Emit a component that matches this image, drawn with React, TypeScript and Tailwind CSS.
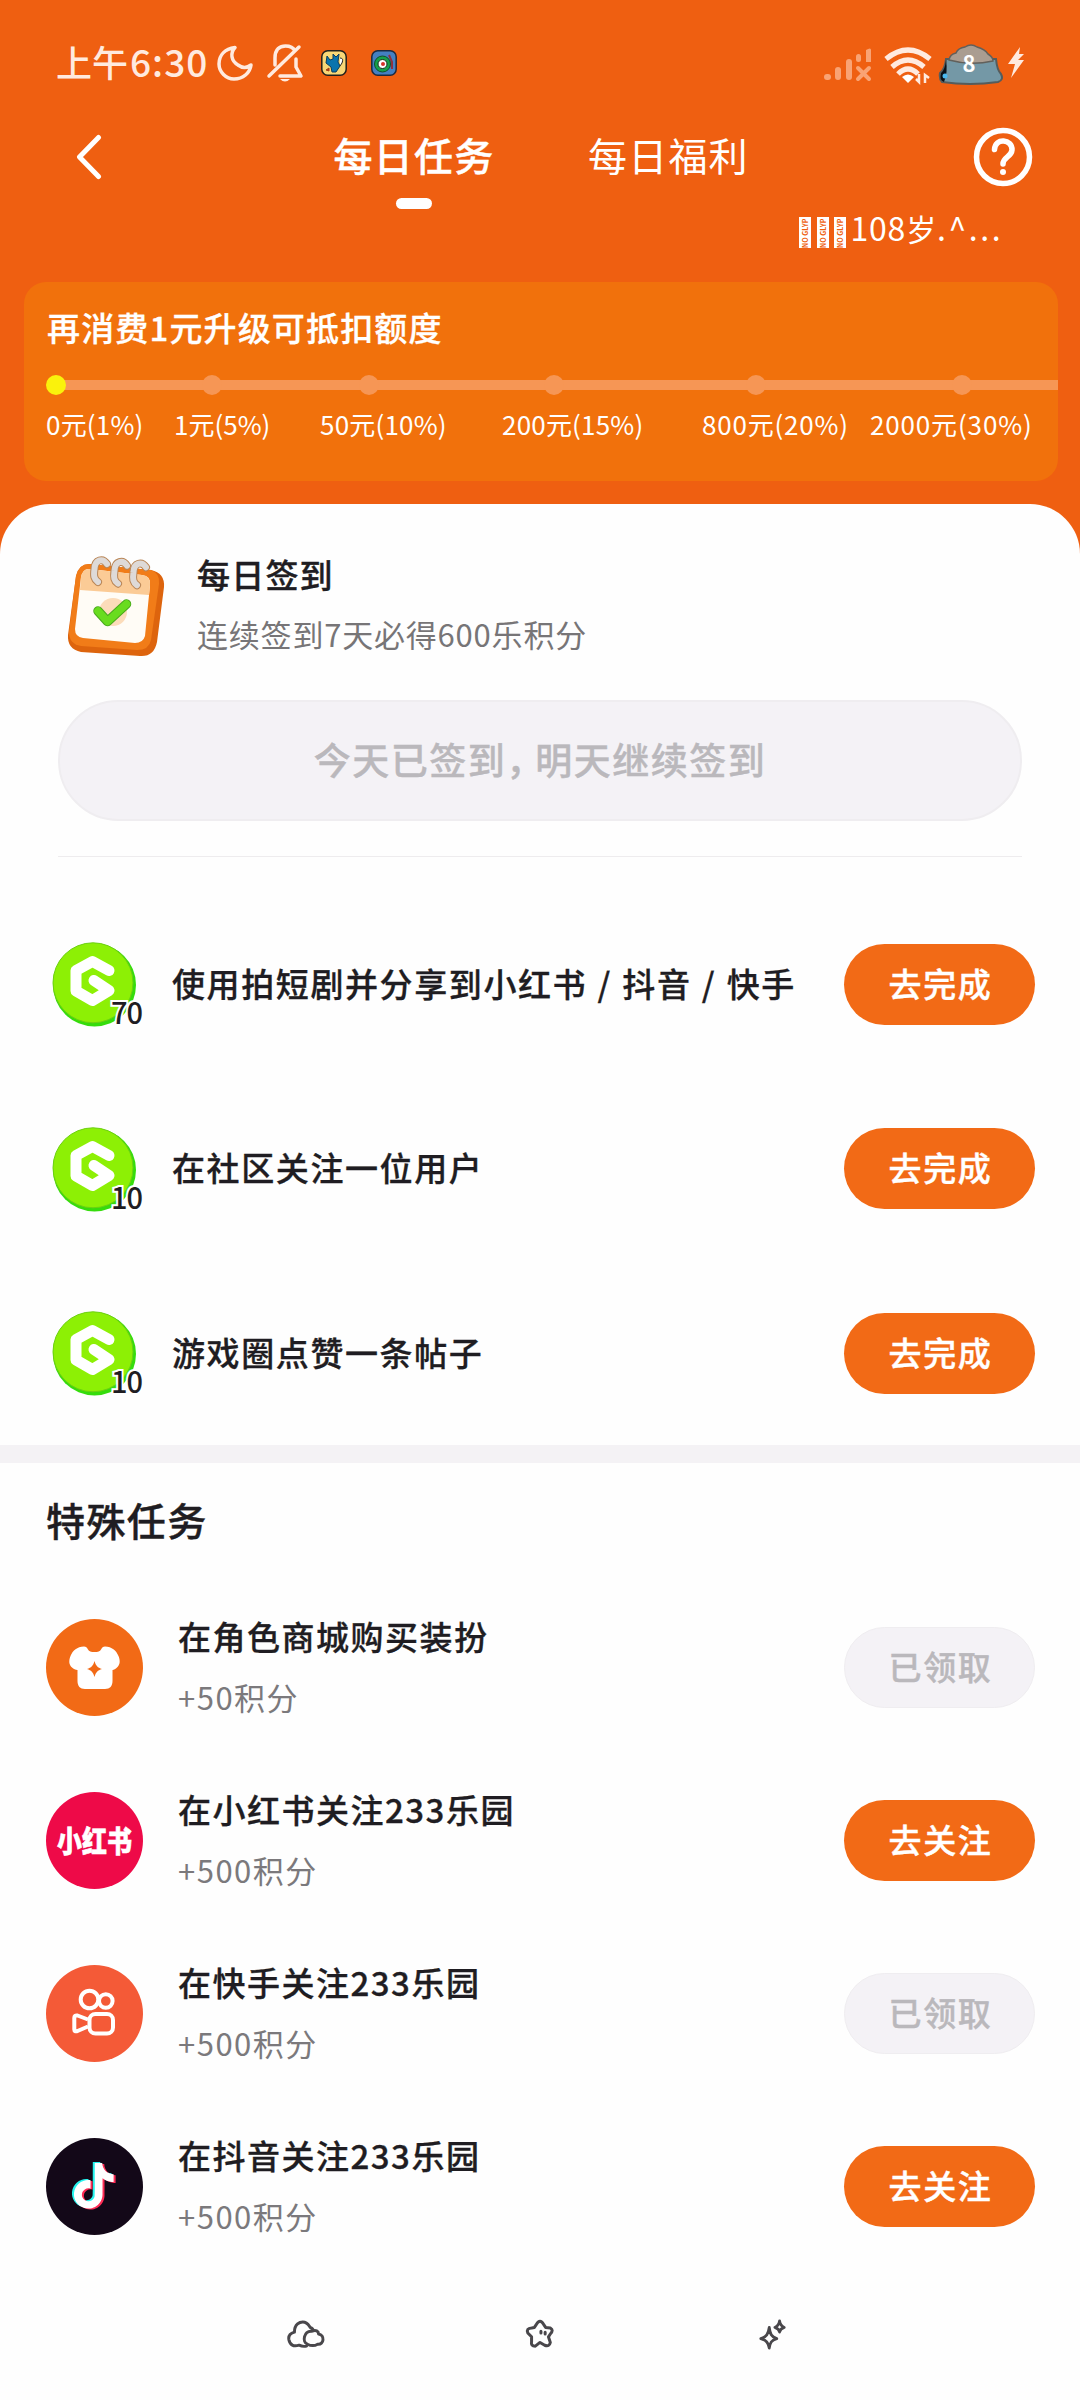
import React from 'react';

interface Level {
  label: string;
  dot: string;
  text: string;
}

interface DailyTask {
  points: number;
  title: string;
}

interface SpecialTask {
  title: string;
  reward: string;
  done: boolean;
  icon: React.ReactNode;
}

const levels: Level[] = [
  { label: '0元(1%)', dot: 'left-[22px] bg-[#faf20c]', text: 'left-[22px] tracking-[0.200px]' },
  { label: '1元(5%)', dot: 'left-[178px] bg-[#f69655]', text: 'left-[150px]' },
  { label: '50元(10%)', dot: 'left-[335px] bg-[#f69655]', text: 'left-[296px] tracking-[0.200px]' },
  { label: '200元(15%)', dot: 'left-[520px] bg-[#f69655]', text: 'left-[478px] tracking-[0.200px]' },
  { label: '800元(20%)', dot: 'left-[722px] bg-[#f69655]', text: 'left-[678px] tracking-[0.800px]' },
  { label: '2000元(30%)', dot: 'left-[928px] bg-[#f69655]', text: 'left-[846px] tracking-[0.850px]' },
];

const dailyTasks: DailyTask[] = [
  { points: 70, title: '使用拍短剧并分享到小红书 / 抖音 / 快手' },
  { points: 10, title: '在社区关注一位用户' },
  { points: 10, title: '游戏圈点赞一条帖子' },
];

const TIKTOK_PATH =
  'M12.525.02c1.31-.02 2.61-.01 3.91-.02.08 1.53.63 3.09 1.75 4.17 1.12 1.11 2.7 1.62 4.24 1.79v4.03c-1.44-.05-2.89-.35-4.2-.97-.57-.26-1.1-.59-1.62-.93-.01 2.92.01 5.84-.02 8.75-.08 1.4-.54 2.79-1.35 3.94-1.31 1.92-3.58 3.17-5.91 3.21-1.43.08-2.86-.31-4.08-1.03-2.02-1.19-3.44-3.37-3.65-5.71-.02-.5-.03-1-.01-1.49.18-1.9 1.12-3.72 2.58-4.96 1.66-1.44 3.98-2.13 6.15-1.72.02 1.48-.04 2.96-.04 4.44-.99-.32-2.15-.23-3.02.37-.63.41-1.11 1.04-1.36 1.75-.21.51-.15 1.07-.14 1.61.24 1.64 1.82 3.02 3.5 2.87 1.12-.01 2.19-.66 2.77-1.61.19-.33.4-.67.41-1.06.1-1.79.06-3.57.07-5.36.01-4.03-.01-8.05.02-12.07z';

const ShirtIcon = () => (
  <svg viewBox="0 0 97 97" className="w-full h-full">
    <path
      d="M38 27.5C40 27.5 41 28.5 42 30.500C43 32.500 45 33 48.500 33S54 32.500 55 30.500C56 28.500 57 27.500 59 27.500C66 28 70 31 72.500 37C74.500 42 74 46 71 48.500C69.500 50 68 51 66.500 51V62C66.500 67 64 70 59 70H39C34 70 31.500 67 31.500 62V51C29.500 51 27.500 50 26 48.500C23 46 22.500 42 24.500 37C27 31 31 28 38 27.500Z"
      fill="#fff"
    />
    <path d="M48.500 42C50 47 51.500 48.500 56 50C51.500 51.500 50 53 48.500 58C47 53 45.500 51.500 41 50C45.500 48.500 47 47 48.500 42Z" fill="#f26a16" />
  </svg>
);

const KuaishouIcon = () => (
  <svg viewBox="0 0 97 97" className="w-full h-full" fill="none" stroke="#fff" strokeWidth="4" strokeLinejoin="round">
    <circle cx="43.500" cy="34.500" r="8.800" />
    <circle cx="59.800" cy="36" r="6.800" />
    <rect x="43.500" y="49" width="23.500" height="19.500" rx="6" />
    <path d="M42 54.500L31.500 50.500Q28.300 50 28.300 53V64.500Q28.300 67 31.500 66L42 61.500" />
  </svg>
);

const DouyinIcon = () => (
  <svg viewBox="0 0 97 97" className="w-full h-full">
    <path d={TIKTOK_PATH} fill="#25f4ee" transform="translate(23 24) scale(1.9)" />
    <path d={TIKTOK_PATH} fill="#fe2c55" transform="translate(27 26) scale(1.9)" />
    <path d={TIKTOK_PATH} fill="#fff" transform="translate(25 25) scale(1.9)" />
  </svg>
);

const specialTasks: SpecialTask[] = [
  {
    title: '在角色商城购买装扮',
    reward: '+50积分',
    done: true,
    icon: <div className="w-[97px] h-[97px] rounded-full bg-[#f26a16]"><ShirtIcon /></div>,
  },
  {
    title: '在小红书关注233乐园',
    reward: '+500积分',
    done: false,
    icon: (
      <div className="w-[97px] h-[97px] rounded-full bg-[#ee0a48] flex items-center justify-center text-[25px] leading-none font-black text-white">
        <span className="scale-y-[1.18] -translate-y-px [-webkit-text-stroke:0.500px_white]">小红书</span>
      </div>
    ),
  },
  {
    title: '在快手关注233乐园',
    reward: '+500积分',
    done: true,
    icon: <div className="w-[97px] h-[97px] rounded-full bg-[#f45a37]"><KuaishouIcon /></div>,
  },
  {
    title: '在抖音关注233乐园',
    reward: '+500积分',
    done: false,
    icon: <div className="w-[97px] h-[97px] rounded-full bg-[#130818]"><DouyinIcon /></div>,
  },
];

const CoinIcon = () => (
  <svg viewBox="0 0 86 86" className="w-[86px] h-[86px]">
    <circle cx="42.500" cy="44" r="41.500" fill="#35dc0c" />
    <circle cx="41" cy="41.800" r="40" fill="#8df005" stroke="#6cd012" strokeWidth="1" />
    <path
      d="M57 29.500L40.500 20.500L24 29.500V50L40.500 59.500L57 49.500L42 39.500"
      fill="none"
      stroke="#fff"
      strokeWidth="11"
      strokeLinejoin="round"
      strokeLinecap="round"
    />
  </svg>
);

const CalendarIcon = () => (
  <svg viewBox="0 0 98 101" className="w-[98px] h-[101px]">
    <path d="M22 8L84 14Q98 17 97 31L90 86Q87 101 73 100L14 96Q0 93 1 79L9 20Q12 8 22 8Z" fill="#dd640d" />
    <path d="M22 8L84 14Q93 17 92 28L84 84Q82 94 70 94L14 90Q2 88 2 76L9 20Q12 8 22 8Z" fill="#f17c18" />
    <path d="M23 13L75 19Q84 20 83 29L78 80Q76 87 68 87L16 82Q8 81 8 73L14 21Q16 12 23 13Z" fill="#fffcf6" />
    <path d="M23 13L75 19Q84 20 83 29L82 39L13 34L14 21Q16 12 23 13Z" fill="#fbcb96" />
    <circle cx="46" cy="56" r="14" fill="#fcdcba" />
    <path d="M31 55L40.500 65.500L59.500 48" fill="none" stroke="#48a81c" strokeWidth="9.500" strokeLinecap="round" strokeLinejoin="round" />
    <path d="M31 55L40.500 65.500L59.500 48" fill="none" stroke="#69dc1e" strokeWidth="7.500" strokeLinecap="round" strokeLinejoin="round" />
    {[0, 20, 39].map(x => (
      <g key={x} transform={`translate(${x} ${x / 12})`} fill="none" strokeLinecap="round">
        <path d="M40 8C36 2 28 3 27.500 13C26.500 20 27 23 31 26" stroke="#b98555" strokeWidth="8" />
        <path d="M40 8C36 2 28 3 27.500 13C26.500 20 27 23 31 26" stroke="#dedad8" strokeWidth="6" />
      </g>
    ))}
  </svg>
);

const StatusIcons = () => (
  <svg viewBox="0 0 206 44" className="w-[206px] h-[44px]">
    {/* mobile signal, not connected */}
    <g fill="#f9a374">
      <rect x="4" y="32" width="7" height="6" rx="3" />
      <rect x="15" y="25" width="6" height="13" rx="3" />
      <rect x="26" y="17" width="6" height="21" rx="3" />
      <rect x="36" y="12" width="5" height="8" rx="2.500" />
      <path d="M46 20V8Q51 5 51 8V20Z" />
      <path d="M38 26L49 37M49 26L38 37" stroke="#f9a374" strokeWidth="4" strokeLinecap="round" />
    </g>
    <g fill="none" stroke="#ffeadf" strokeWidth="5.200">
      <path d="M66 17Q88 -1 110 17" />
      <path d="M72 25Q88 11 104 25" />
      <path d="M78 32Q88 22 98 32" />
    </g>
    <path d="M82 35Q88 30 94 35L88 41Z" fill="#fff" />
    <path d="M99 32V40L96 37M105 41V33L109 36" fill="none" stroke="#ffeadf" strokeWidth="2.500" />
    <path d="M122 40Q119 37 120 31Q125 27 126 17H176Q177 28 181 32Q184 38 178 40Q150 44 122 40Z" fill="#7498a6" stroke="#555c5c" strokeWidth="2" />
    <path d="M129 18Q130 12 136 11Q138 6 145 5Q151 1 157 5Q165 7 168 12Q173 15 173 19Q150 24 129 18Z" fill="#aa9d91" stroke="#62605b" strokeWidth="1.500" />
    <path d="M126 18Q125 28 121 31Q119 38 124 40Q128 31 126 18Z" fill="#0a1117" />
    <circle cx="125" cy="34" r="2.500" fill="#4bb9ef" />
    <text x="149" y="29.500" textAnchor="middle" fill="#fff" className="text-[22px] font-bold">8</text>
    <path d="M200 5L188 22H195L191 36L204 18H198L204 12H199Z" fill="#ffeadf" />
  </svg>
);

const StatusBar = () => (
  <div className="h-[104px] pt-[20px] pl-[56px] pr-[54px] flex items-start justify-between">
    <div className="h-[86px] flex items-center text-[#ffeadf]">
      <span className="-mt-[3px] w-[161px] text-[36px] font-medium whitespace-nowrap">
        上午<span className="ml-[2px] text-[37px] tracking-[1px]">6:30</span>
      </span>
      <svg viewBox="0 0 36 36" className="w-[36px] h-[36px]" fill="none" stroke="currentColor" strokeWidth="3.500" strokeLinejoin="round">
        <path d="M18 2.500C8 4 2 10 2 19C2 27 9 34 17 34C26 34 33 28 34 20C30 23 25 23 21 20C14 16 13 8 18 2.500Z" />
      </svg>
      <svg viewBox="0 0 38 40" className="ml-[13px] w-[38px] h-[40px]" fill="none" stroke="currentColor" strokeWidth="3.500" strokeLinecap="round" strokeLinejoin="round">
        <path d="M9 22V15C9 6 14 3 19.500 3C24 3 27 4 29 8M30 16V24L35 33H14M33 4L3 33" />
        <path d="M14 36H24Q19 41 14 36Z" fill="currentColor" stroke="none" />
      </svg>
      <svg viewBox="0 0 26 26" className="ml-[17px] w-[26px] h-[26px]">
        <rect x="0.800" y="0.800" width="24.400" height="24.400" rx="6" fill="#f8d777" stroke="#22201c" strokeWidth="1.500" />
        <path d="M6 6L9 10L12 9V4L15 7L18 4L17 12L19 16L15 22H11L10 17L5 13Z" fill="#0a74ad" stroke="#0c3d5c" />
        <path d="M19 8Q23 8 21 13L19 16" fill="#fff" stroke="#222" />
        <path d="M5 20L8 18L8 21Z" fill="#a63d17" stroke="#a63d17" />
      </svg>
      <svg viewBox="0 0 26 26" className="ml-[24px] w-[26px] h-[26px]">
        <rect x="0.800" y="0.800" width="24.400" height="24.400" rx="6" fill="#4480c2" stroke="#1b2a41" strokeWidth="1.500" />
        <path d="M18 5L21 12V19" fill="none" stroke="#8d3140" strokeWidth="2" />
        <circle cx="11.500" cy="14" r="8" fill="#16a04b" stroke="#114e2c" />
        <circle cx="11.500" cy="14" r="4.500" fill="#fff" stroke="#152c1b" />
        <circle cx="12" cy="14" r="2" fill="#d5322b" />
      </svg>
    </div>
    <div className="pt-[22px]"><StatusIcons /></div>
  </div>
);

const Header = () => (
  <div className="h-[113px] flex text-white text-[39px] tracking-[1.200px] leading-[100px]">
    <svg viewBox="0 0 28 46" className="ml-[76px] mt-[30px] w-[28px] h-[46px]" fill="none" stroke="currentColor" strokeWidth="5" strokeLinecap="round" strokeLinejoin="round">
      <path d="M22.500 3.500L3.500 23L22.500 42.500" />
    </svg>
    <div className="ml-[230px] w-[160px] flex flex-col items-center">
      <span className="font-medium whitespace-nowrap [-webkit-text-stroke:0.400px]">每日任务</span>
      <span className="-mt-[6px] w-[36px] h-[11px] rounded-full bg-white" />
    </div>
    <span className="ml-[94px] w-[160px] whitespace-nowrap">每日福利</span>
    <svg viewBox="0 0 60 60" className="ml-[225px] mt-[23px] w-[60px] h-[60px]" fill="none" stroke="currentColor" strokeWidth="5.500" strokeLinecap="round">
      <circle cx="30" cy="30" r="26.500" />
      <path d="M21.500 22.500C22 10 39.500 12 39 23C38.500 30 30 30 30 37" />
      <circle cx="30" cy="45" r="3" fill="currentColor" stroke="none" />
    </svg>
  </div>
);

const UserTicker = () => (
  <div className="h-[65px] pl-[799px] flex items-start text-white text-[32px] leading-[48px] whitespace-nowrap">
    {/* glyphs the nickname font lacks */}
    {[0, 1, 2].map(i => (
      <span key={i} className="mr-[5.500px] w-[12px] h-[31px] shrink-0 bg-white text-[#ef5f11] text-[7px] leading-[12px] font-bold [writing-mode:vertical-rl] rotate-180">
        NO GLYP
      </span>
    ))}
    <span className="-mt-[14px] -ml-px tracking-[0.800px]">
      108<span className="text-[30px]">岁</span><span className="tracking-[2.600px]">.^...</span>
    </span>
  </div>
);

const LevelCard = () => (
  <div className="ml-6 mr-[22px] h-[199px] rounded-[22px] bg-[#f1710c] text-white overflow-hidden">
    <h2 className="pt-[25px] pl-[23px] text-[33px] leading-[40px] font-medium tracking-[1.150px] [-webkit-text-stroke:0.300px]">再消费1元升级可抵扣额度</h2>
    <div className="relative mt-[28px] h-[20px]">
      <div className="ml-[32px] pt-[5px]"><div className="h-[10px] bg-[#f69655]" /></div>
      {levels.map(level => (
        <span key={level.label} className={`absolute top-0 w-[20px] h-[20px] rounded-full ${level.dot}`} />
      ))}
    </div>
    <div className="relative h-[60px] text-[26px] leading-[60px]">
      {levels.map(level => (
        <span key={level.label} className={`absolute -top-px whitespace-nowrap ${level.text}`}>
          {level.label}
        </span>
      ))}
    </div>
  </div>
);

const CheckIn = () => (
  <section className="mx-[58px] h-[353px] border-b border-[#eeecee]">
    <div className="pt-[52px] pl-[9px] flex">
      <CalendarIcon />
      <div className="ml-[32px] -mt-[2px]">
        <h3 className="text-[33px] leading-[40px] font-medium tracking-[1.200px] [-webkit-text-stroke:0.400px]">每日签到</h3>
        <p className="mt-[20px] text-[31px] leading-[40px] tracking-[0.800px] text-[#777577]">连续签到7天必得600乐积分</p>
      </div>
    </div>
    <button className="mt-[43px] pb-[2px] w-full h-[121px] rounded-full border-2 border-[#efedf0] bg-[#f4f2f6] text-[37px] tracking-[1.500px] font-medium text-[#bab8bc] [-webkit-text-stroke:0.400px]">
      今天已签到<span className="tracking-[-8px]">，</span>明天继续签到
    </button>
  </section>
);

const ActionButton = ({ label, disabled = false }: { label: string; disabled?: boolean }) => (
  <button
    disabled={disabled}
    className={`ml-auto shrink-0 w-[191px] h-[81px] pb-[2px] pl-[2px] rounded-full text-[33px] font-medium tracking-[1.600px] [-webkit-text-stroke:0.400px] ${
      disabled ? 'bg-[#f4f2f6] border border-[#efedf0] text-[#bab8bc]' : 'bg-[#f26a16] text-white'
    }`}
  >
    {label}
  </button>
);

const App: React.FC = () => {
  return (
    <div
      lang="zh-CN"
      className="w-[1080px] h-[2400px] overflow-hidden bg-[#ef5f11] text-[#1f1d22] font-['Noto_Sans_CJK_SC',sans-serif] flex flex-col"
    >
      <StatusBar />
      <Header />
      <UserTicker />
      <LevelCard />

      <main className="mt-[23px] flex-1 rounded-t-[50px] bg-[#fefefe]">
        <CheckIn />

        <section className="h-[588px] pt-[35px] pl-[52px] pr-[45px]">
          {dailyTasks.map(task => (
            <div key={task.title} className="h-[184.500px] flex items-center">
              <div className="relative w-[86px] h-[86px]">
                <CoinIcon />
                <span className="absolute -right-[4px] bottom-[4px] text-[29px] leading-[24px] font-medium tracking-[-1px] [paint-order:stroke_fill] [-webkit-text-stroke:4px_white]">
                  {task.points}
                </span>
              </div>
              <span className="ml-[34px] -mt-[2px] text-[33px] font-medium tracking-[1.600px] [word-spacing:1.300px] whitespace-nowrap [-webkit-text-stroke:0.300px]">{task.title}</span>
              <ActionButton label="去完成" />
            </div>
          ))}
        </section>

        <div className="h-[18px] bg-[#f4f2f5]" />

        <section className="pl-[46px] pr-[45px] h-[810px]">
          <h2 className="pt-[26px] h-[118px] text-[39px] leading-[60px] tracking-[1.400px] font-medium [-webkit-text-stroke:0.400px]">特殊任务</h2>
          {specialTasks.map(task => (
            <div key={task.title} className="h-[173px] flex items-center">
              {task.icon}
              <div className="ml-[35px] -mt-[2px]">
                <h3 className="text-[33px] leading-[40px] font-medium tracking-[1.500px] [-webkit-text-stroke:0.300px]">{task.title}</h3>
                <p className="mt-[21px] text-[31px] leading-[40px] tracking-[1.500px] text-[#7b797c]">{task.reward}</p>
              </div>
              <ActionButton label={task.done ? '已领取' : '去关注'} disabled={task.done} />
            </div>
          ))}
        </section>

        <nav className="h-[126px] pt-[46px] pl-[287px] flex text-[#49474b]">
          <svg viewBox="0 0 42 32" className="w-[39px] h-[30px]" fill="none" stroke="currentColor" strokeWidth="3.200" strokeLinecap="round" strokeLinejoin="round">
            <path d="M21 29Q17 30 13 28Q4 31 2 22Q1 16 8 14C8 5 14 3 17 3C22 3 23 6 25 9Q28 10 28 12" />
            <path d="M22 27C16 25 18 12 27 13C31 11 34 13 34 16C41 17 40 28 33 27Q28 30 22 27Z" />
          </svg>
          <svg viewBox="0 0 32 32" className="ml-[199px] w-[30px] h-[30px]" fill="none" stroke="currentColor" strokeWidth="3.200" strokeLinecap="round" strokeLinejoin="round">
            <path d="M12 6Q16 -1 20 6L22 9L27 9.500Q31 12 27 16L25 19L27 25Q26 30 21 28L16 25L11 29Q6 29 7 24L7 19L3 15Q1 10 7 9.500L10 9Z" />
            <path d="M17 13V15M21.500 14V16" />
          </svg>
          <svg viewBox="0 0 32 34" className="ml-[203px] -mt-px w-[30px] h-[32px]" fill="none" stroke="currentColor" strokeWidth="3" strokeLinejoin="round">
            <path d="M12 10C13 17 14 20 20 22C14 24 13 26 12 32C11 26 9 24 3 22C9 20 11 17 12 10Z" />
            <path d="M23 3C23.500 7 25 8.500 28 10C25 11 23.500 12 23 15C22.500 12 21 11 18 10C21 8.500 22.500 7 23 3Z" />
          </svg>
        </nav>
      </main>
    </div>
  );
};

export default App;
